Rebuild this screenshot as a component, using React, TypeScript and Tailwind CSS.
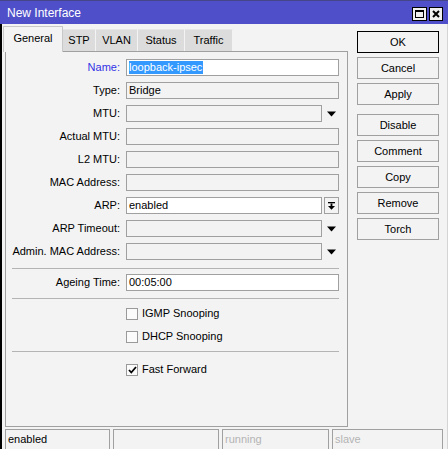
import type { ReactNode } from 'react'

type FieldKind = 'edit' | 'read' | 'combo' | 'arp'

interface FieldRow {
  label: string
  kind: FieldKind
  value?: string
  highlight?: boolean
  blue?: boolean
}

const TOP_FIELDS: FieldRow[] = [
  { label: 'Name:', kind: 'edit', value: 'loopback-ipsec', highlight: true, blue: true },
  { label: 'Type:', kind: 'read', value: 'Bridge' },
  { label: 'MTU:', kind: 'combo' },
  { label: 'Actual MTU:', kind: 'read' },
  { label: 'L2 MTU:', kind: 'read' },
  { label: 'MAC Address:', kind: 'read' },
  { label: 'ARP:', kind: 'arp', value: 'enabled' },
  { label: 'ARP Timeout:', kind: 'combo' },
  { label: 'Admin. MAC Address:', kind: 'combo' },
]

const TABS = [
  { name: 'STP', w: 'w-[33px]' },
  { name: 'VLAN', w: 'w-[42px]' },
  { name: 'Status', w: 'w-[47px]' },
  { name: 'Traffic', w: 'w-[48px]' },
]

const BUTTONS = ['Cancel', 'Apply', 'Disable', 'Comment', 'Copy', 'Remove', 'Torch']

function DownArrow() {
  return (
    <svg width="9" height="6" viewBox="0 0 9 6" className="block">
      <path d="M0 0.5H9L4.5 5.5Z" fill="#000" />
    </svg>
  )
}

function Row({ label, blue, children }: { label: string; blue?: boolean; children: ReactNode }) {
  return (
    <div className="flex items-center h-[17px]">
      <div className={`w-[114px] text-right whitespace-nowrap ${blue ? 'text-[#3232e6]' : 'text-black'}`}>
        {label}
      </div>
      <div className="ml-[6px] flex h-full">{children}</div>
    </div>
  )
}

function Field({ row }: { row: FieldRow }) {
  const box = 'h-[17px] border border-[#a0a0a0] flex items-center pl-[2px] text-black'
  if (row.kind === 'combo') {
    return (
      <Row label={row.label}>
        <div className={`${box} w-[196px] bg-[#f3f3f3]`} />
        <div className="w-[17px] flex items-center justify-center pl-[2px]">
          <DownArrow />
        </div>
      </Row>
    )
  }
  if (row.kind === 'arp') {
    return (
      <Row label={row.label}>
        <div className={`${box} w-[196px] bg-white`}>{row.value}</div>
        <div className="ml-[2px] w-[15px] h-[17px] border border-[#a0a0a0] bg-[#f3f3f3] flex items-center justify-center">
          <svg width="7" height="8" viewBox="0 0 7 8" className="block">
            <rect x="0" y="0" width="7" height="1.3" fill="#000" />
            <rect x="2.6" y="1.5" width="1.8" height="3" fill="#000" />
            <path d="M0 4H7L3.5 7.8Z" fill="#000" />
          </svg>
        </div>
      </Row>
    )
  }
  return (
    <Row label={row.label} blue={row.blue}>
      <div className={`${box} w-[213px] ${row.kind === 'edit' ? 'bg-white' : 'bg-[#f3f3f3]'}`}>
        {row.highlight ? (
          <span className="bg-[#3399ff] text-white pr-[1px] leading-[13px]">{row.value}</span>
        ) : (
          row.value
        )}
      </div>
    </Row>
  )
}

function Check({ label, checked, className }: { label: string; checked?: boolean; className: string }) {
  return (
    <div className={`flex items-center h-[17px] ${className}`}>
      <div className="ml-[120px] w-[12px] h-[12px] border border-[#9a9a9a] bg-[#fbfbfb] flex items-center justify-center">
        {checked && (
          <svg width="9" height="8" viewBox="0 0 9 8" className="block">
            <path d="M1 4L3.3 6.5L8 1" stroke="#000" strokeWidth="1.8" fill="none" />
          </svg>
        )}
      </div>
      <span className="ml-[4px] text-black">{label}</span>
    </div>
  )
}

export default function App() {
  return (
    <div className="w-[448px] h-[449px] overflow-hidden flex flex-col bg-[#f3f3f3] font-['Liberation_Sans',Arial,sans-serif] text-[11px] leading-none">
      {/* title bar */}
      <div className="h-[24px] shrink-0 bg-[#4f50c9] border-t border-[#45458a] flex items-center justify-between pl-[7px] pr-[5px]">
        <span className="text-white text-[12px]">New Interface</span>
        <div className="flex gap-[2px] mt-[2px]">
          <div className="w-[15px] h-[14px] bg-[#f0f0f0] border border-black flex items-center justify-center">
            <div className="w-[9px] h-[8px] border border-black border-t-2" />
          </div>
          <div className="w-[14px] h-[14px] bg-[#f0f0f0] border border-black flex items-center justify-center">
            <svg width="8" height="8" viewBox="0 0 8 8" className="block">
              <path d="M1 1L7 7M7 1L1 7" stroke="#000" strokeWidth="2" />
            </svg>
          </div>
        </div>
      </div>

      <div className="flex-1 flex flex-col border-l-2 border-l-black border-r border-r-[#d4d4d4]">
        <div className="flex">
          {/* left: tabs + panel */}
          <div className="w-[346px] flex flex-col">
            <div className="h-[27px] flex items-end pl-[1px]">
              <div className="w-[60px] h-[26px] mb-[-1px] relative z-10 bg-[#f3f3f3] border border-b-0 border-[#c8c8c8] flex items-center justify-center pb-[3px] text-black">
                General
              </div>
              {TABS.map(t => (
                <div
                  key={t.name}
                  className={`${t.w} h-[22px] bg-[#dcdcdc] border-r border-[#f3f3f3] border-t border-t-[#e6e6e6] flex items-center justify-center text-black`}
                >
                  {t.name}
                </div>
              ))}
            </div>
            <div className="ml-[3px] w-[343px] h-[376px] border border-[#a0a0a0] pt-[7px] flex flex-col">
              <div className="flex flex-col gap-[6px]">
                {TOP_FIELDS.map(f => (
                  <Field key={f.label} row={f} />
                ))}
              </div>
              <div className="mt-[8px] ml-[6px] w-[327px] h-px bg-[#b4b4b4]" />
              <div className="mt-[5px]">
                <Field row={{ label: 'Ageing Time:', kind: 'edit', value: '00:05:00' }} />
              </div>
              <div className="mt-[7px] ml-[6px] w-[327px] h-px bg-[#b4b4b4]" />
              <Check label="IGMP Snooping" className="mt-[6px]" />
              <Check label="DHCP Snooping" className="mt-[6px]" />
              <div className="mt-[6px] ml-[6px] w-[327px] h-px bg-[#b4b4b4]" />
              <Check label="Fast Forward" checked className="mt-[9px]" />
            </div>
          </div>

          {/* right: buttons */}
          <div className="ml-[9px] pt-[7px] flex flex-col gap-[4px]">
            <div className="w-[82px] h-[22px] border border-black bg-[#f3f3f3] flex items-center justify-center text-black">
              OK
            </div>
            {BUTTONS.map(b => (
              <div
                key={b}
                className={`w-[82px] h-[22px] border border-[#a0a0a0] bg-[#f3f3f3] flex items-center justify-center text-black ${b === 'Disable' ? 'mt-[5px]' : ''}`}
              >
                {b}
              </div>
            ))}
          </div>
        </div>

        {/* status bar */}
        <div className="mt-[2px] ml-[3px] flex gap-[3px]">
          <div className="w-[105px] h-[22px] border border-[#a0a0a0] pl-[2px] pt-[4px] text-black">enabled</div>
          <div className="w-[106px] h-[22px] border border-[#a0a0a0]" />
          <div className="w-[107px] h-[22px] border border-[#a0a0a0] pl-[2px] pt-[4px] text-[#b4b4b4]">running</div>
          <div className="w-[111px] h-[22px] border border-[#a0a0a0] pl-[2px] pt-[4px] text-[#b4b4b4]">slave</div>
        </div>
      </div>
    </div>
  )
}
